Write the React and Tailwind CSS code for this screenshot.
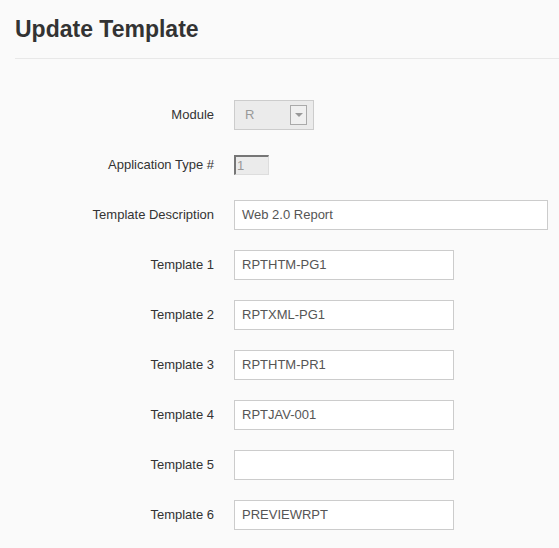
import React from 'react';

const templates = [
  { label: 'Template 1', value: 'RPTHTM-PG1' },
  { label: 'Template 2', value: 'RPTXML-PG1' },
  { label: 'Template 3', value: 'RPTHTM-PR1' },
  { label: 'Template 4', value: 'RPTJAV-001' },
  { label: 'Template 5', value: '' },
  { label: 'Template 6', value: 'PREVIEWRPT' },
];

const Row = ({ label, children }) => (
  <div className="flex items-center h-[50px]">
    <label className="w-[214px] shrink-0 text-right text-[13px] text-[#333]">{label}</label>
    <div className="pl-[20px] flex items-center">{children}</div>
  </div>
);

const TextBox = ({ value, wide }) => (
  <div
    className={`${wide ? 'w-[314px]' : 'w-[220px]'} h-[30px] bg-white border border-[#cccccc] flex items-center px-[7px] text-[13px] text-[#555]`}
  >
    {value}
  </div>
);

export default function App() {
  return (
    <div
      className="min-h-[548px] w-full bg-[#fafafa] overflow-hidden"
      style={{ fontFamily: '"Liberation Sans", Arial, sans-serif' }}
    >
      <div className="pl-[15px] pt-[14px]">
        <h1 className="text-[23px] leading-[30px] font-bold text-[#333]">Update Template</h1>
        <div className="mt-[14px] h-px bg-[#e8e8e8]" />
      </div>

      <div className="pt-[31px]">
        <Row label="Module">
          <div className="w-[80px] h-[30px] bg-[#ebebeb] border border-[#cccccc] flex items-center justify-between pl-[10px] pr-[6px] text-[13px] text-[#999]">
            <span>R</span>
            <div className="w-[17px] h-[20px] bg-[#f0f0f0] border border-[#aaa] flex items-center justify-center">
              <div className="w-0 h-0 border-l-[4px] border-r-[4px] border-t-[4px] border-l-transparent border-r-transparent border-t-[#999]" />
            </div>
          </div>
        </Row>
        <Row label="Application Type #">
          <div className="w-[35px] h-[20px] bg-[#ebebeb] border-t-2 border-l-2 border-t-[#767676] border-l-[#767676] border-r border-b border-r-[#ddd] border-b-[#ddd] flex items-center pl-[1px] text-[13px] text-[#999]">
            1
          </div>
        </Row>
        <Row label="Template Description">
          <TextBox value="Web 2.0 Report" wide />
        </Row>
        {templates.map((t) => (
          <Row key={t.label} label={t.label}>
            <TextBox value={t.value} />
          </Row>
        ))}
      </div>
    </div>
  );
}
